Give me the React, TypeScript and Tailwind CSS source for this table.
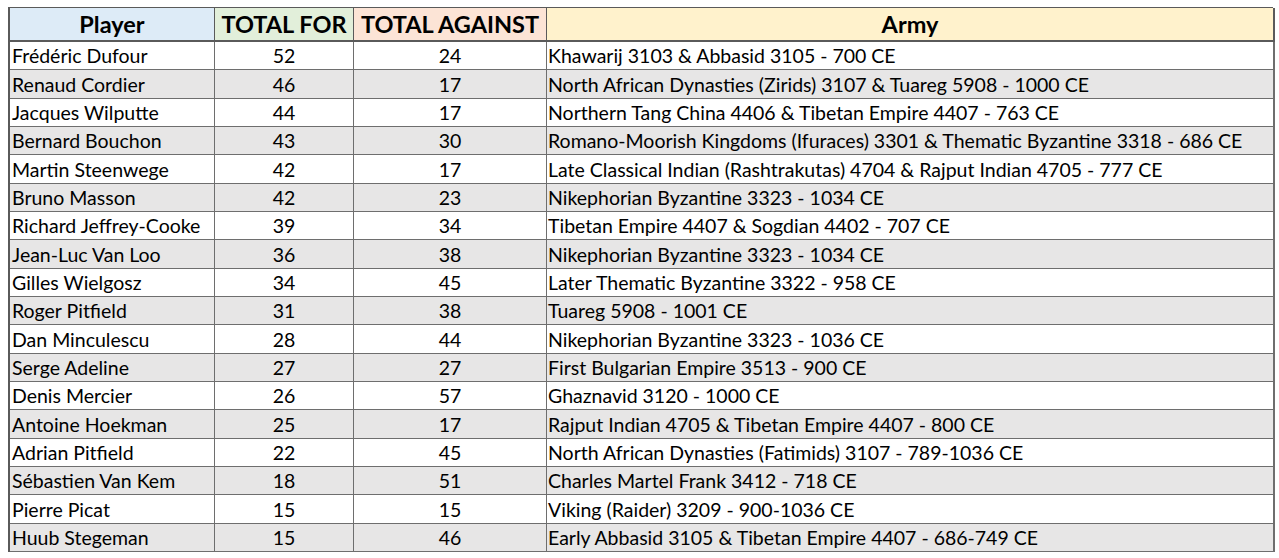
const rows: [string, number, number, string][] = [
  ["Frédéric Dufour", 52, 24, "Khawarij 3103 & Abbasid 3105 - 700 CE"],
  ["Renaud Cordier", 46, 17, "North African Dynasties (Zirids) 3107 & Tuareg 5908 - 1000 CE"],
  ["Jacques Wilputte", 44, 17, "Northern Tang China 4406 & Tibetan Empire 4407 - 763 CE"],
  ["Bernard Bouchon", 43, 30, "Romano-Moorish Kingdoms (Ifuraces) 3301 & Thematic Byzantine 3318 - 686 CE"],
  ["Martin Steenwege", 42, 17, "Late Classical Indian (Rashtrakutas) 4704 & Rajput Indian 4705 - 777 CE"],
  ["Bruno Masson", 42, 23, "Nikephorian Byzantine 3323 - 1034 CE"],
  ["Richard Jeffrey-Cooke", 39, 34, "Tibetan Empire 4407 & Sogdian 4402 - 707 CE"],
  ["Jean-Luc Van Loo", 36, 38, "Nikephorian Byzantine 3323 - 1034 CE"],
  ["Gilles Wielgosz", 34, 45, "Later Thematic Byzantine 3322 - 958 CE"],
  ["Roger Pitfield", 31, 38, "Tuareg 5908 - 1001 CE"],
  ["Dan Minculescu", 28, 44, "Nikephorian Byzantine 3323 - 1036 CE"],
  ["Serge Adeline", 27, 27, "First Bulgarian Empire 3513 - 900 CE"],
  ["Denis Mercier", 26, 57, "Ghaznavid 3120 - 1000 CE"],
  ["Antoine Hoekman", 25, 17, "Rajput Indian 4705 & Tibetan Empire 4407 - 800 CE"],
  ["Adrian Pitfield", 22, 45, "North African Dynasties (Fatimids) 3107 - 789-1036 CE"],
  ["Sébastien Van Kem", 18, 51, "Charles Martel Frank 3412 - 718 CE"],
  ["Pierre Picat", 15, 15, "Viking (Raider) 3209 - 900-1036 CE"],
  ["Huub Stegeman", 15, 46, "Early Abbasid 3105 & Tibetan Empire 4407 - 686-749 CE"],
];

const cell = "flex items-end border-r border-b border-[#6e6e6e] pb-[1px] leading-[24px] whitespace-nowrap overflow-hidden";
const head = "flex items-center justify-center border-r border-b-2 border-[#5a5a5a] text-[23.5px] font-bold leading-[30px]";

export default function App() {
  return (
    <div className="h-[558px] w-[1279px] bg-white pl-[8px] pt-[7px] text-black [font-family:Lato,'Noto_Sans',sans-serif]">
      <div className="grid w-[1265px] grid-cols-[205px_139px_193px_728px] grid-rows-[34px_repeat(18,28.33px)] border-t border-l-2 border-[#5a5a5a] text-[19.5px]">
        <div className={`${head} bg-[#ddebf7]`}>Player</div>
        <div className={`${head} bg-[#e2efda]`}>TOTAL FOR</div>
        <div className={`${head} bg-[#fce4d6]`}>TOTAL AGAINST</div>
        <div className={`${head} bg-[#fff2cc] border-r-2`}>Army</div>
        {rows.map(([name, forPts, against, army], i) => {
          const bg = i % 2 === 1 ? "bg-[#e7e6e6]" : "bg-white";
          return [
            <div key={`${i}a`} className={`${cell} ${bg} pl-[2px]`}>{name}</div>,
            <div key={`${i}b`} className={`${cell} ${bg} justify-center`}>{forPts}</div>,
            <div key={`${i}c`} className={`${cell} ${bg} justify-center`}>{against}</div>,
            <div key={`${i}d`} className={`${cell} ${bg} border-r-2 pl-[1px]`}>{army}</div>,
          ];
        })}
      </div>
    </div>
  );
}
